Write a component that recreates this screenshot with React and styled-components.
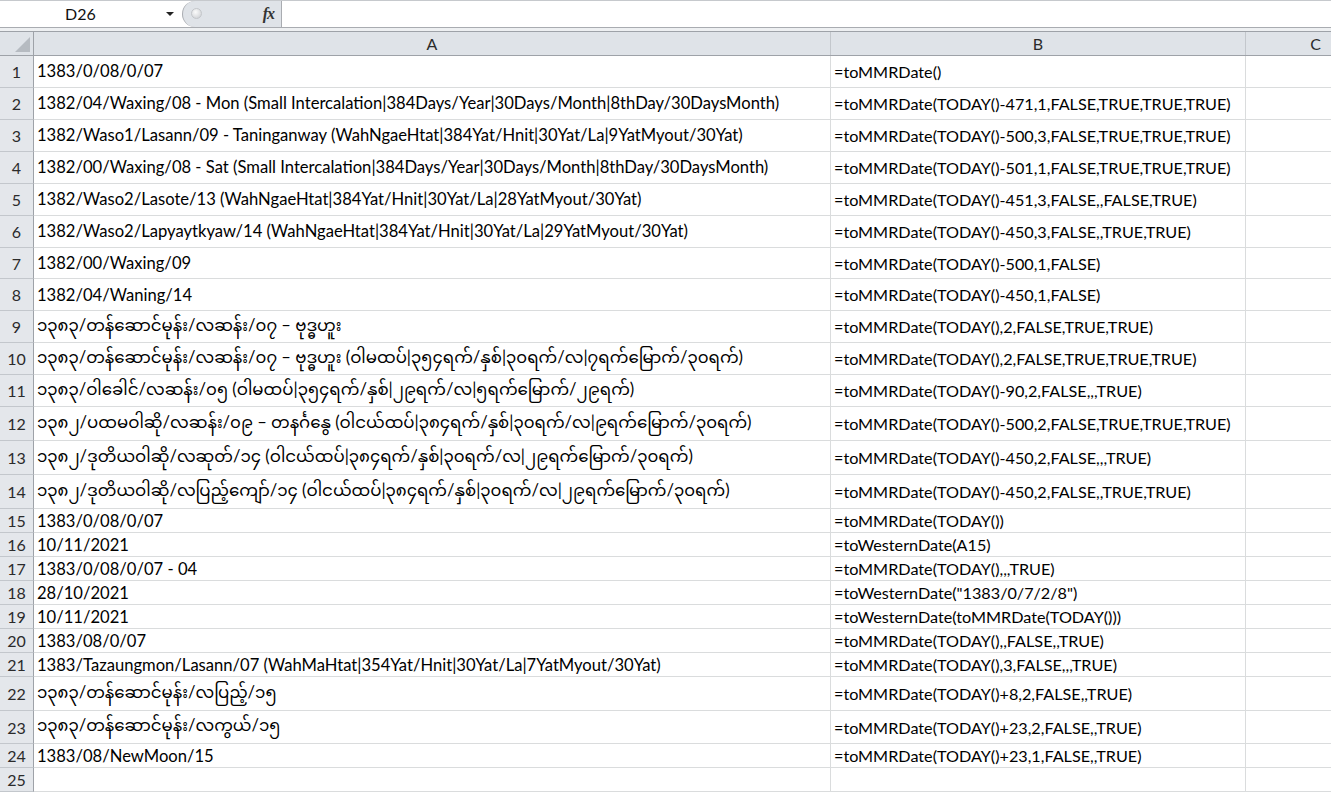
import React from "react";
import styled, { createGlobalStyle } from "styled-components";

const GlobalStyle = createGlobalStyle`
  html, body {
    margin: 0;
    padding: 0;
    background: #ffffff;
    overflow: hidden;
  }
  body {
    font-family: Lato, "Noto Sans Myanmar", "Noto Sans", sans-serif;
  }
`;

// widths of the grid columns: row header, A, B, C
const COLS = "34px 797px 415px 140px";

const Window = styled.div`
  width: 1331px;
  height: 792px;
  overflow: hidden;
  display: flex;
  flex-direction: column;
`;

const FormulaBar = styled.div`
  display: flex;
  height: 26px;
  border-top: 1px solid #c6c9cd;
  border-bottom: 1px solid #a9acb1;
  background: #ffffff;
`;

const NameBox = styled.div`
  width: 182px;
  display: flex;
  align-items: center;
  position: relative;
  font-size: 16px;
  color: #111;
  span {
    margin-left: 65px;
  }
`;

const DropArrow = styled.div`
  position: absolute;
  left: 166px;
  top: 11px;
  width: 0;
  height: 0;
  border-left: 4px solid transparent;
  border-right: 4px solid transparent;
  border-top: 4px solid #222;
`;

const FxPill = styled.div`
  width: 100px;
  display: flex;
  align-items: center;
  justify-content: space-between;
  background: #dfe3e8;
  border-left: 1px solid #a9acb1;
  border-right: 1px solid #a9acb1;
  border-radius: 13px 0 0 13px;
  padding: 0 7px 0 8px;
  box-sizing: border-box;
`;

const Knob = styled.div`
  width: 9px;
  height: 9px;
  border-radius: 50%;
  background: radial-gradient(circle at 40% 35%, #fbfbfb, #c9ccd0);
  border: 1px solid #c3c6ca;
`;

const Fx = styled.span`
  font-family: "Liberation Serif", serif;
  font-style: italic;
  font-size: 16px;
  color: #333;
  font-weight: bold;
  letter-spacing: -1px;
`;

const FormulaInput = styled.div`
  flex: 1;
`;

const Gap = styled.div`
  height: 3px;
  background: #eef0f2;
  border-bottom: 1px solid #9ea2a8;
`;

const Row = styled.div`
  display: grid;
  grid-template-columns: ${COLS};
  height: ${({ h }) => h}px;
  box-sizing: border-box;
`;

const HeaderRow = styled(Row)`
  background: #dfe3e8;
  border-bottom: 1px solid #9ea2a8;
`;

const ColHead = styled.div`
  display: flex;
  align-items: center;
  justify-content: center;
  font-size: 16px;
  color: #2b2b2b;
  border-right: 1px solid #c3c7cc;
`;

const Corner = styled.div`
  position: relative;
  border-right: 1px solid #9ea2a8;
  &::after {
    content: "";
    position: absolute;
    right: 3px;
    bottom: 3px;
    width: 0;
    height: 0;
    border-left: 15px solid transparent;
    border-bottom: 15px solid #b6bbc1;
  }
`;

const RowHead = styled.div`
  background: #e4e7eb;
  border-right: 1px solid #9ea2a8;
  border-bottom: 1px solid #c3c7cc;
  display: flex;
  align-items: center;
  justify-content: center;
  font-size: 16px;
  color: #2b2b2b;
`;

const Cell = styled.div`
  border-right: 1px solid #dadcdd;
  border-bottom: 1px solid #dadcdd;
  display: flex;
  align-items: center;
  padding-left: 3px;
  font-size: ${({ size }) => size || 16}px;
  color: #000;
  white-space: nowrap;
  overflow: hidden;
`;

const rows = [
  [32, "1383/0/08/0/07", "=toMMRDate()"],
  [32, "1382/04/Waxing/08 - Mon (Small Intercalation|384Days/Year|30Days/Month|8thDay/30DaysMonth)", "=toMMRDate(TODAY()-471,1,FALSE,TRUE,TRUE,TRUE)"],
  [32, "1382/Waso1/Lasann/09 - Taninganway (WahNgaeHtat|384Yat/Hnit|30Yat/La|9YatMyout/30Yat)", "=toMMRDate(TODAY()-500,3,FALSE,TRUE,TRUE,TRUE)"],
  [32, "1382/00/Waxing/08 - Sat (Small Intercalation|384Days/Year|30Days/Month|8thDay/30DaysMonth)", "=toMMRDate(TODAY()-501,1,FALSE,TRUE,TRUE,TRUE)"],
  [32, "1382/Waso2/Lasote/13 (WahNgaeHtat|384Yat/Hnit|30Yat/La|28YatMyout/30Yat)", "=toMMRDate(TODAY()-451,3,FALSE,,FALSE,TRUE)"],
  [32, "1382/Waso2/Lapyaytkyaw/14 (WahNgaeHtat|384Yat/Hnit|30Yat/La|29YatMyout/30Yat)", "=toMMRDate(TODAY()-450,3,FALSE,,TRUE,TRUE)"],
  [32, "1382/00/Waxing/09", "=toMMRDate(TODAY()-500,1,FALSE)"],
  [32, "1382/04/Waning/14", "=toMMRDate(TODAY()-450,1,FALSE)"],
  [32, "၁၃၈၃/တန်ဆောင်မုန်း/လဆန်း/၀၇ – ဗုဒ္ဓဟူး", "=toMMRDate(TODAY(),2,FALSE,TRUE,TRUE)"],
  [32, "၁၃၈၃/တန်ဆောင်မုန်း/လဆန်း/၀၇ – ဗုဒ္ဓဟူး (ဝါမထပ်|၃၅၄ရက်/နှစ်|၃၀ရက်/လ|၇ရက်မြောက်/၃၀ရက်)", "=toMMRDate(TODAY(),2,FALSE,TRUE,TRUE,TRUE)"],
  [32, "၁၃၈၃/ဝါခေါင်/လဆန်း/၀၅ (ဝါမထပ်|၃၅၄ရက်/နှစ်|၂၉ရက်/လ|၅ရက်မြောက်/၂၉ရက်)", "=toMMRDate(TODAY()-90,2,FALSE,,,TRUE)"],
  [34, "၁၃၈၂/ပထမဝါဆို/လဆန်း/၀၉ – တနင်္ဂနွေ (ဝါငယ်ထပ်|၃၈၄ရက်/နှစ်|၃၀ရက်/လ|၉ရက်မြောက်/၃၀ရက်)", "=toMMRDate(TODAY()-500,2,FALSE,TRUE,TRUE,TRUE)"],
  [34, "၁၃၈၂/ဒုတိယဝါဆို/လဆုတ်/၁၄ (ဝါငယ်ထပ်|၃၈၄ရက်/နှစ်|၃၀ရက်/လ|၂၉ရက်မြောက်/၃၀ရက်)", "=toMMRDate(TODAY()-450,2,FALSE,,,TRUE)"],
  [34, "၁၃၈၂/ဒုတိယဝါဆို/လပြည့်ကျော်/၁၄ (ဝါငယ်ထပ်|၃၈၄ရက်/နှစ်|၃၀ရက်/လ|၂၉ရက်မြောက်/၃၀ရက်)", "=toMMRDate(TODAY()-450,2,FALSE,,TRUE,TRUE)"],
  [24, "1383/0/08/0/07", "=toMMRDate(TODAY())"],
  [24, "10/11/2021", "=toWesternDate(A15)"],
  [24, "1383/0/08/0/07 - 04", "=toMMRDate(TODAY(),,,TRUE)"],
  [24, "28/10/2021", '=toWesternDate("1383/0/7/2/8")'],
  [24, "10/11/2021", "=toWesternDate(toMMRDate(TODAY()))"],
  [24, "1383/08/0/07", "=toMMRDate(TODAY(),,FALSE,,TRUE)"],
  [24, "1383/Tazaungmon/Lasann/07 (WahMaHtat|354Yat/Hnit|30Yat/La|7YatMyout/30Yat)", "=toMMRDate(TODAY(),3,FALSE,,,TRUE)"],
  [34, "၁၃၈၃/တန်ဆောင်မုန်း/လပြည့်/၁၅", "=toMMRDate(TODAY()+8,2,FALSE,,TRUE)"],
  [33, "၁၃၈၃/တန်ဆောင်မုန်း/လကွယ်/၁၅", "=toMMRDate(TODAY()+23,2,FALSE,,TRUE)"],
  [24, "1383/08/NewMoon/15", "=toMMRDate(TODAY()+23,1,FALSE,,TRUE)"],
  [24, "", ""],
];

export default function App() {
  return (
    <Window>
      <GlobalStyle />
      <FormulaBar>
        <NameBox>
          <span>D26</span>
          <DropArrow />
        </NameBox>
        <FxPill>
          <Knob />
          <Fx>fx</Fx>
        </FxPill>
        <FormulaInput />
      </FormulaBar>
      <Gap />
      <HeaderRow h={24}>
        <Corner />
        <ColHead>A</ColHead>
        <ColHead>B</ColHead>
        <ColHead>C</ColHead>
      </HeaderRow>
      {rows.map(([h, a, b], i) => (
        <Row key={i} h={h}>
          <RowHead>{i + 1}</RowHead>
          <Cell size={16.6}>{a}</Cell>
          <Cell size={16.2}>{b}</Cell>
          <Cell />
        </Row>
      ))}
    </Window>
  );
}
